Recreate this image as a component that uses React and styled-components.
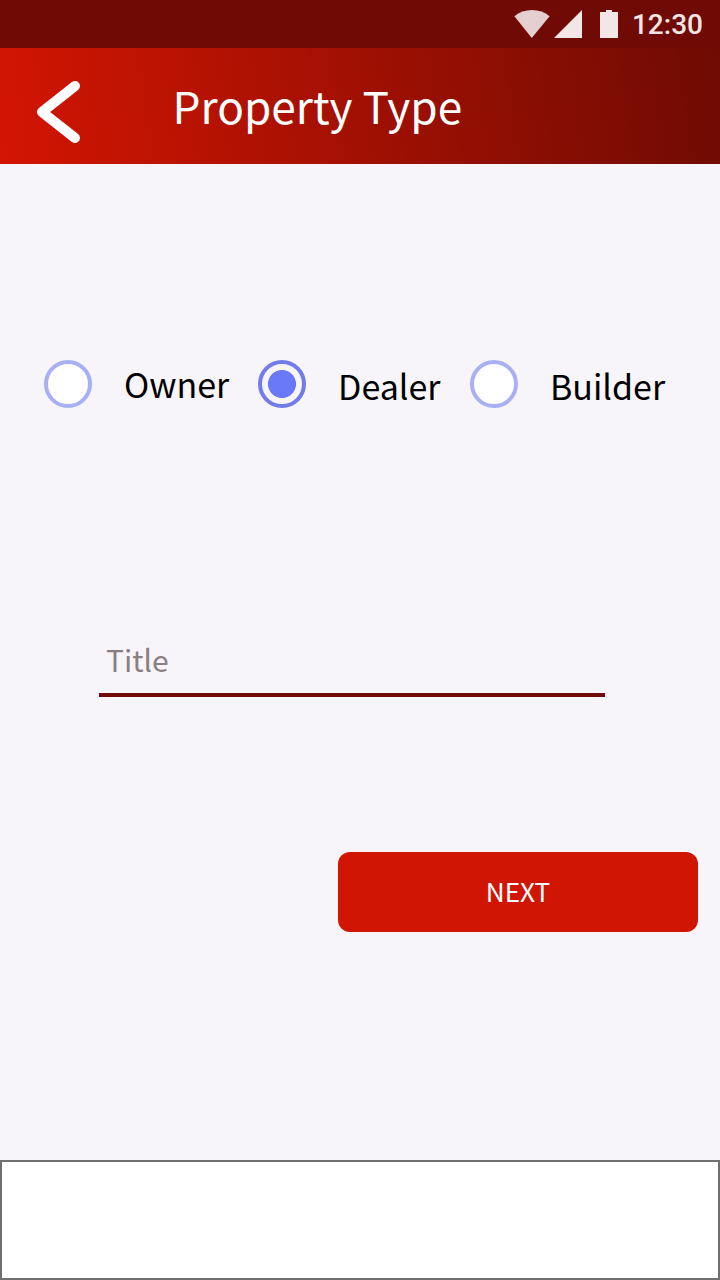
import React, { useState } from "react";
import styled, { createGlobalStyle } from "styled-components";

const GlobalStyle = createGlobalStyle`
  *, *::before, *::after { box-sizing: border-box; }
  body { margin: 0; background: #f7f5fa; }
`;

const Screen = styled.div`
  width: 720px;
  height: 1280px;
  display: flex;
  flex-direction: column;
  background: #f7f5fa;
  font-family: "Noto Sans CJK JP", "Noto Sans", sans-serif;
  overflow: hidden;
`;

const StatusBar = styled.div`
  height: 48px;
  flex: none;
  display: flex;
  align-items: center;
  justify-content: flex-end;
  padding-right: 17px;
  background: #6f0b04;
`;

const StatusIcons = styled.svg`
  width: 106px;
  height: 48px;
  margin-right: 12px;
`;

const Clock = styled.span`
  padding-top: 2px;
  font: 500 28px/48px Roboto, sans-serif;
  color: #f4e4e3;
`;

const Header = styled.header`
  height: 116px;
  flex: none;
  display: flex;
  align-items: flex-start;
  padding-left: 36px;
  background: linear-gradient(82deg, #d31502 0%, #6f0b03 100%);
`;

const BackButton = styled.button`
  width: 44px;
  height: 64px;
  margin: 32px 92.5px 0 0;
  padding: 0;
  border: 0;
  background: none;
  svg { display: block; }
`;

const PageTitle = styled.h1`
  margin: 25px 0 0;
  font-size: 44.2px;
  font-weight: 400;
  line-height: 64px;
  color: #fff;
`;

const Form = styled.form`
  flex: 1;
  display: flex;
  flex-direction: column;
  padding-top: 196px;
`;

const Options = styled.div`
  display: grid;
  grid-template-columns: 214px 212px auto;
  padding-left: 44px;
  height: 48px;
`;

const Option = styled.label`
  display: flex;
  align-items: flex-start;
  gap: 32px;
`;

const Radio = styled.input`
  appearance: none;
  flex: none;
  width: 48px;
  height: 48px;
  margin: 0;
  border: 4px solid #a8b0f4;
  border-radius: 50%;
  background: #fff;
  &:checked {
    border-color: #707de9;
    background: radial-gradient(circle, #6979f8 13.6px, #f7f5fa 14.4px);
  }
`;

const OptionText = styled.span`
  padding-top: ${(p) => p.$drop}px;
  font-size: 34px;
  line-height: 48px;
  color: #000;
`;

const Field = styled.input`
  width: 506px;
  height: 60px;
  margin: 229px 0 0 99px;
  padding: 0 0 13px 7px;
  border: 0;
  border-bottom: 4px solid #6f0b08;
  outline: none;
  background: none;
  font: 400 30px/43px "Noto Sans CJK JP", "Noto Sans", sans-serif;
  &::placeholder { color: #8b8081; opacity: 1; }
`;

const NextButton = styled.button`
  align-self: flex-end;
  width: 360px;
  height: 80px;
  margin: 155px 22px 0 0;
  padding: 0 0 2px;
  border: 0;
  border-radius: 12px;
  background: #d11503;
  color: #fff;
  font: 400 26.2px/78px "Noto Sans CJK JP", "Noto Sans", sans-serif;
`;

const BottomBar = styled.footer`
  height: 120px;
  flex: none;
  border: 2px solid #707070;
  background: #fff;
`;

const types = [
  { name: "Owner", drop: 0 },
  { name: "Dealer", drop: 2 },
  { name: "Builder", drop: 2 },
];

export default function App() {
  const [type, setType] = useState("Dealer");
  return (
    <Screen>
      <GlobalStyle />
      <StatusBar>
        <StatusIcons viewBox="0 0 106 48" aria-hidden="true">
          <path d="M0.4 16.3C10 8 26 8 35.6 16.3L17.8 38Z" fill="#e6cfd0" />
          <path d="M68 10V38H40Z" fill="#f2e6e6" />
          <path d="M86 12h6v-2h6v2h6v26h-18z" fill="#f2e6e6" />
        </StatusIcons>
        <Clock>12:30</Clock>
      </StatusBar>
      <Header>
        <BackButton type="button" aria-label="Back">
          <svg width="44" height="64" viewBox="0 0 44 64" fill="none">
            <path
              d="M39 6L6 32L39 58"
              stroke="#fff"
              strokeWidth="10"
              strokeLinecap="round"
              strokeLinejoin="round"
            />
          </svg>
        </BackButton>
        <PageTitle>Property Type</PageTitle>
      </Header>
      <Form onSubmit={(e) => e.preventDefault()}>
        <Options>
          {types.map((t) => (
            <Option key={t.name}>
              <Radio
                type="radio"
                name="type"
                checked={type === t.name}
                onChange={() => setType(t.name)}
              />
              <OptionText $drop={t.drop}>{t.name}</OptionText>
            </Option>
          ))}
        </Options>
        <Field placeholder="Title" aria-label="Title" />
        <NextButton>NEXT</NextButton>
      </Form>
      <BottomBar />
    </Screen>
  );
}
